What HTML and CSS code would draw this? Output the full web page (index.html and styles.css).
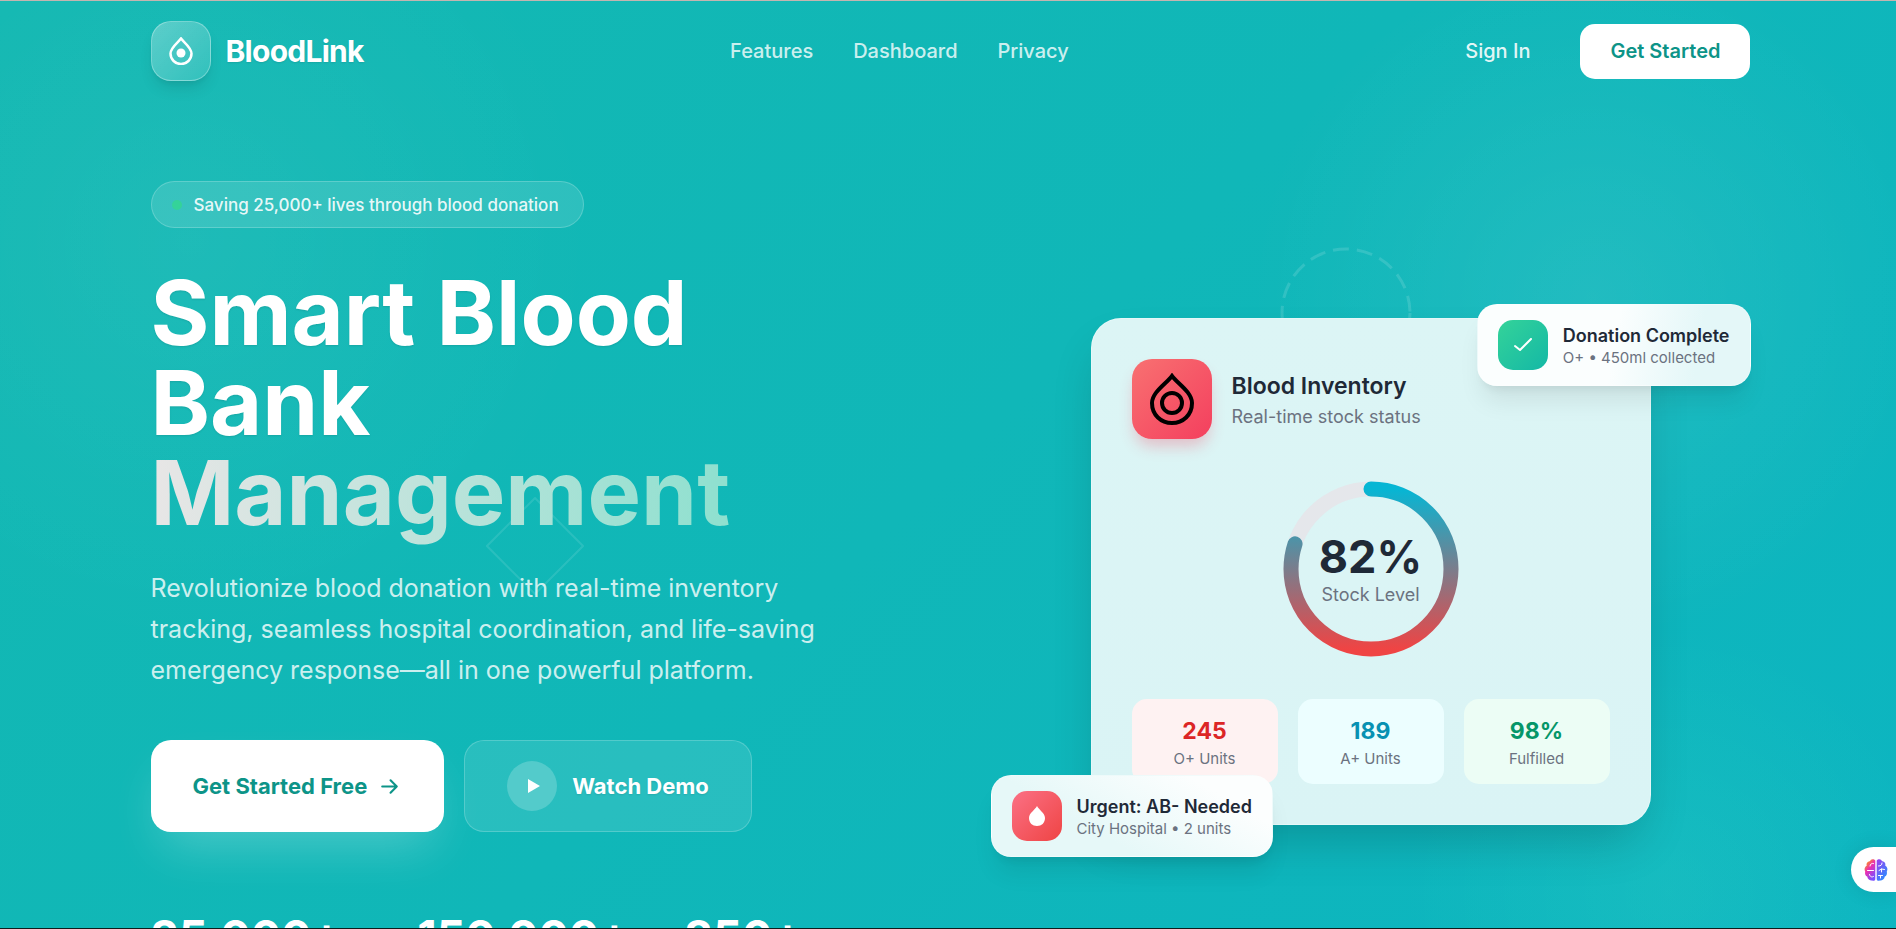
FILE: index.html
```html
<!DOCTYPE html>
<html lang="en">
<head>
  <meta charset="UTF-8">
  <meta name="viewport" content="width=device-width, initial-scale=1.0">
  <title>BloodLink - Smart Blood Bank Management</title>
  <link rel="stylesheet" href="styles.css">
</head>
<body>
  <!-- Background shapes -->
  <div class="bg-shapes">
    <svg class="shape-diamond" viewBox="0 0 100 100" fill="none">
      <path d="M50 1 L99 50 L50 99 L1 50 Z" stroke="white" stroke-width="2"/>
    </svg>
    <svg class="shape-circle" viewBox="0 0 132 132" fill="none">
      <circle cx="66" cy="66" r="64" stroke="white" stroke-width="3" stroke-dasharray="16 8"/>
    </svg>
  </div>

  <header class="container navbar">
    <a href="#" class="logo">
      <span class="logo-icon">
        <svg viewBox="0 0 24 28" fill="none">
          <path d="M12 1.500 C9.500 5 1.500 10.500 1.500 16.500 C1.500 22.500 6.200 27 12 27 C17.800 27 22.500 22.500 22.500 16.500 C22.500 10.500 14.500 5 12 1.500 Z" stroke="white" stroke-width="2.500"/>
          <circle cx="12" cy="16" r="4.500" fill="white"/>
        </svg>
      </span>
      <span class="logo-text">BloodLink</span>
    </a>

    <nav class="nav-links">
      <a href="#features">Features</a>
      <a href="#dashboard">Dashboard</a>
      <a href="#privacy">Privacy</a>
    </nav>

    <div class="nav-actions">
      <a href="#signin" class="sign-in">Sign In</a>
      <button type="button" class="btn-nav">Get Started</button>
    </div>
  </header>

  <main class="container hero">
    <section class="hero-content">
      <div class="hero-badge">
        <span class="badge-dot"></span>
        <span>Saving 25,000+ lives through blood donation</span>
      </div>

      <h1>Smart Blood Bank <span class="highlight">Management</span></h1>

      <p class="hero-text">Revolutionize blood donation with real-time inventory tracking, seamless hospital coordination, and life-saving emergency response—all in one powerful platform.</p>

      <div class="hero-buttons">
        <button type="button" class="btn btn-primary">
          Get Started Free
          <svg class="arrow" viewBox="0 0 24 24" fill="none" stroke="currentColor" stroke-width="2" stroke-linecap="round" stroke-linejoin="round">
            <path d="M5 12 H19 M13 6 L19 12 L13 18"/>
          </svg>
        </button>
        <button type="button" class="btn btn-glass">
          <span class="play">
            <svg viewBox="0 0 12 16"><path d="M0 1 L12 8 L0 15 Z" fill="white"/></svg>
          </span>
          Watch Demo
        </button>
      </div>

      <div class="hero-stats">
        <div>25,000+</div>
        <div>150,000+</div>
        <div>850+</div>
      </div>
    </section>

    <section class="hero-visual">
      <div class="card">
        <div class="card-header">
          <div class="card-icon">
            <svg viewBox="0 0 44 52" fill="none" stroke="black" stroke-width="4">
              <path d="M22 3 C17 10 2 19 2 30 C2 42 11 50 22 50 C33 50 42 42 42 30 C42 19 27 10 22 3 Z"/>
              <circle cx="22" cy="30" r="10"/>
            </svg>
          </div>
          <div>
            <h2>Blood Inventory</h2>
            <p>Real-time stock status</p>
          </div>
        </div>

        <div class="donut">
          <svg viewBox="0 0 200 200" fill="none">
            <defs>
              <linearGradient id="stockGradient" x1="0" y1="0" x2="1" y2="0">
                <stop offset="0" stop-color="#ef4444"/>
                <stop offset="1" stop-color="#06b6d4"/>
              </linearGradient>
            </defs>
            <circle cx="100" cy="100" r="80" stroke="#e5e7eb" stroke-width="15"/>
            <circle cx="100" cy="100" r="80" stroke="url(#stockGradient)" stroke-width="15" stroke-linecap="round" stroke-dasharray="402 503" transform="rotate(-90 100 100)"/>
          </svg>
          <div class="donut-label">
            <strong>82%</strong>
            <span>Stock Level</span>
          </div>
        </div>

        <div class="card-stats">
          <div class="stat stat-red"><strong>245</strong><span>O+ Units</span></div>
          <div class="stat stat-cyan"><strong>189</strong><span>A+ Units</span></div>
          <div class="stat stat-green"><strong>98%</strong><span>Fulfilled</span></div>
        </div>
      </div>

      <div class="float-card float-top">
        <div class="float-icon icon-green">
          <svg viewBox="0 0 18 14" fill="none" stroke="white" stroke-width="2" stroke-linecap="round" stroke-linejoin="round">
            <path d="M1 8 L6 12 L17 1"/>
          </svg>
        </div>
        <div>
          <h3>Donation Complete</h3>
          <p>O+ • 450ml collected</p>
        </div>
      </div>

      <div class="float-card float-bottom">
        <div class="float-icon icon-red">
          <svg viewBox="0 0 18 20" fill="white">
            <path d="M9 0 C7 4 1 7 1 12 C1 17 4.500 20 9 20 C13.500 20 17 17 17 12 C17 7 11 4 9 0 Z"/>
          </svg>
        </div>
        <div>
          <h3>Urgent: AB- Needed</h3>
          <p>City Hospital • 2 units</p>
        </div>
      </div>
    </section>
  </main>

  <button type="button" class="assistant-tab" aria-label="Open assistant">
    <svg viewBox="0 0 24 24" fill="none">
      <defs>
        <linearGradient id="brainLeft" x1="0" y1="0" x2="0.600" y2="1">
          <stop offset="0" stop-color="#f9a01b"/>
          <stop offset="0.200" stop-color="#f98a2b"/>
          <stop offset="0.500" stop-color="#ec2fb0"/>
          <stop offset="1" stop-color="#7c4dff"/>
        </linearGradient>
        <linearGradient id="brainRight" x1="0" y1="0" x2="0.600" y2="1">
          <stop offset="0" stop-color="#a03cf0"/>
          <stop offset="1" stop-color="#2d8cff"/>
        </linearGradient>
      </defs>
      <path fill="url(#brainLeft)" d="M11.300 2.500 C10 0.500 6.500 0.800 6 3.200 C3.500 3.200 2 5.500 2.800 7.600 C0.500 8.800 0 12 1.200 13.500 C0.600 16 1.500 18 3.200 18.600 C3.500 21.500 6.500 22.800 8.200 22.400 C9.800 23.500 11.300 22.500 11.300 21 Z"/>
      <path fill="url(#brainRight)" d="M12.700 2.500 C14 0.500 17.500 0.800 18 3.200 C20.500 3.200 22 5.500 21.200 7.600 C23.500 8.800 24 12 22.800 13.500 C23.400 16 22.500 18 20.800 18.600 C20.500 21.500 17.500 22.800 15.800 22.400 C14.200 23.500 12.700 22.500 12.700 21 Z"/>
      <path stroke="white" stroke-width="1" stroke-linecap="round" d="M6 8 C6 6 8 5 9.500 5.500 M3.500 12.500 H9.500 M5.500 16.500 C6 19 8 19.500 9.500 18.500 M14.500 8 C17 8 18 7 18 5 M15 12.500 L17.500 11 L20.500 11.500 M17.500 11 V14 M14.500 17.500 H18.500 M16.500 17.500 V20"/>
    </svg>
  </button>
</body>
</html>
```
FILE: styles.css
```css
* {
  box-sizing: border-box;
  margin: 0;
  padding: 0;
}

body {
  position: relative;
  height: 100vh;
  overflow: hidden;
  padding-left: 5px;
  border-top: 1px solid #c4b5b0;
  border-bottom: 1px solid #101c1c;
  font-family: 'Inter', sans-serif;
  color: #ffffff;
  background:
    radial-gradient(circle at 10% 26%, rgba(255, 255, 255, 0.05), transparent 22%),
    radial-gradient(circle at 84% 32%, rgba(255, 255, 255, 0.08), transparent 20%),
    radial-gradient(circle at 88% 96%, rgba(120, 255, 200, 0.09), transparent 14%),
    linear-gradient(135deg, #13b8b2 0%, #10b7b8 50%, #0cb5c1 100%);
}

a {
  color: inherit;
  text-decoration: none;
}

button {
  font-family: inherit;
  border: none;
  cursor: pointer;
}

.container {
  position: relative;
  width: 100%;
  max-width: 1600px;
  margin: 0 auto;
}

/* Background shapes */
.bg-shapes svg {
  position: absolute;
}

.shape-diamond {
  left: 486px;
  top: 496px;
  width: 98px;
  height: 98px;
  opacity: 0.1;
}

.shape-circle {
  left: 1280px;
  top: 246px;
  width: 132px;
  height: 132px;
  opacity: 0.13;
}

/* Navbar */
.navbar {
  display: flex;
  align-items: center;
  justify-content: space-between;
  padding: 20px 0;
}

.logo {
  display: flex;
  align-items: center;
  gap: 15px;
}

.logo-icon {
  display: flex;
  align-items: center;
  justify-content: center;
  width: 60px;
  height: 60px;
  border: 1px solid rgba(255, 255, 255, 0.3);
  border-radius: 20px;
  background: linear-gradient(135deg, rgba(255, 255, 255, 0.3), rgba(255, 255, 255, 0.1));
  box-shadow: 0 10px 15px -3px rgba(0, 0, 0, 0.1), 0 4px 6px -4px rgba(0, 0, 0, 0.1);
}

.logo-icon svg {
  width: 24px;
  height: 28px;
}

.logo-text {
  font-size: 30px;
  font-weight: 700;
  letter-spacing: -0.025em;
  text-shadow: 0 1px 2px rgba(0, 0, 0, 0.1);
}

.nav-links {
  display: flex;
  gap: 40px;
  font-size: 20px;
  font-weight: 500;
  color: rgba(255, 255, 255, 0.8);
}

.nav-actions {
  display: flex;
  align-items: center;
  gap: 20px;
}

.sign-in {
  padding: 15px 30px;
  font-size: 20px;
  font-weight: 500;
  color: rgba(255, 255, 255, 0.9);
}

.btn-nav {
  height: 55px;
  padding: 0 30px;
  border-radius: 15px;
  background: #ffffff;
  color: #0d9488;
  font-size: 20px;
  font-weight: 600;
}

/* Hero */
.hero {
  display: grid;
  grid-template-columns: 1fr 1fr;
  gap: 80px;
  align-items: center;
  padding-top: 80px;
}

.hero-badge {
  display: inline-flex;
  align-items: center;
  gap: 12px;
  height: 47px;
  padding: 0 24px 0 20px;
  border: 1px solid rgba(255, 255, 255, 0.2);
  border-radius: 24px;
  background: rgba(255, 255, 255, 0.12);
  color: rgba(255, 255, 255, 0.9);
  font-size: 17px;
  font-weight: 500;
  margin-bottom: 40px;
}

.badge-dot {
  width: 10px;
  height: 10px;
  border-radius: 50%;
  background: #34d399;
}

h1 {
  font-size: 90px;
  line-height: 90px;
  font-weight: 700;
  margin-bottom: 30px;
  text-shadow: 0 1px 2px rgba(0, 0, 0, 0.1);
}

.highlight {
  background: linear-gradient(90deg, #e8e6e6, #8ee0cf);
  background-clip: text;
  -webkit-background-clip: text;
  color: transparent;
  text-shadow: none;
}

.hero-text {
  max-width: 700px;
  margin-bottom: 49px;
  font-size: 25px;
  line-height: 41px;
  color: rgba(255, 255, 255, 0.8);
}

.hero-buttons {
  display: flex;
  gap: 20px;
  margin-bottom: 80px;
}

.btn {
  display: flex;
  align-items: center;
  height: 92px;
  padding: 0 42px;
  border-radius: 20px;
  font-size: 22px;
  font-weight: 700;
}

.btn-primary {
  gap: 10px;
  background: #ffffff;
  color: #0d9488;
  box-shadow: 0 25px 50px -12px rgba(255, 255, 255, 0.25);
}

.arrow {
  width: 25px;
  height: 25px;
}

.btn-glass {
  gap: 15px;
  border: 1px solid rgba(255, 255, 255, 0.2);
  background: rgba(255, 255, 255, 0.1);
  color: #ffffff;
  text-shadow: 0 1px 2px rgba(0, 0, 0, 0.1);
}

.play {
  display: flex;
  align-items: center;
  justify-content: center;
  width: 50px;
  height: 50px;
  padding-left: 4px;
  border-radius: 50%;
  background: rgba(255, 255, 255, 0.2);
}

.play svg {
  width: 12px;
  height: 16px;
}

.hero-stats {
  display: grid;
  grid-template-columns: repeat(3, 1fr);
  gap: 40px;
  font-size: 45px;
  line-height: 50px;
  font-weight: 700;
}

/* Inventory card */
.hero-visual {
  position: relative;
}

.card {
  max-width: 560px;
  margin: 0 auto;
  padding: 40px;
  border: 1px solid rgba(255, 255, 255, 0.3);
  border-radius: 30px;
  background: linear-gradient(#dcf5f5, #daf4f5);
  box-shadow: 0 25px 50px -12px rgba(0, 0, 0, 0.2);
  color: #1f2937;
}

.card-header {
  display: flex;
  align-items: center;
  gap: 20px;
  margin-bottom: 30px;
}

.card-icon {
  display: flex;
  align-items: center;
  justify-content: center;
  width: 80px;
  height: 80px;
  border-radius: 20px;
  background: linear-gradient(135deg, #f87171, #f43f5e);
  box-shadow: 0 10px 15px -3px rgba(244, 63, 94, 0.3);
}

.card-icon svg {
  width: 44px;
  height: 52px;
}

.card-header h2 {
  font-size: 23px;
  line-height: 35px;
  font-weight: 600;
}

.card-header p {
  font-size: 18px;
  line-height: 25px;
  color: #6b7280;
}

.donut {
  position: relative;
  width: 200px;
  height: 200px;
  margin: 0 auto 30px;
}

.donut svg {
  display: block;
}

.donut-label {
  position: absolute;
  inset: 0;
  display: flex;
  flex-direction: column;
  align-items: center;
  justify-content: center;
}

.donut-label strong {
  font-size: 45px;
  line-height: 50px;
}

.donut-label span {
  font-size: 18px;
  line-height: 25px;
  color: #6b7280;
}

.card-stats {
  display: grid;
  grid-template-columns: repeat(3, 1fr);
  gap: 20px;
}

.stat {
  display: flex;
  flex-direction: column;
  align-items: center;
  padding: 15px;
  border-radius: 15px;
}

.stat strong {
  font-size: 23px;
  line-height: 35px;
}

.stat span {
  font-size: 15px;
  line-height: 20px;
  color: #6b7280;
}

.stat-red {
  background: #fef2f2;
}

.stat-red strong {
  color: #dc2626;
}

.stat-cyan {
  background: #ecfeff;
}

.stat-cyan strong {
  color: #0891b2;
}

.stat-green {
  background: #ecfdf5;
}

.stat-green strong {
  color: #059669;
}

/* Floating notifications */
.float-card {
  position: absolute;
  display: flex;
  align-items: center;
  gap: 15px;
  padding: 15px 20px;
  border: 1px solid rgba(255, 255, 255, 0.3);
  border-radius: 20px;
  color: #1f2937;
  box-shadow: 0 20px 25px -5px rgba(0, 0, 0, 0.08), 0 8px 10px -6px rgba(0, 0, 0, 0.08);
}

.float-top {
  top: -14px;
  right: 0;
  background: linear-gradient(100deg, #fbfefe 50%, #e4f7f8 80%);
}

.float-bottom {
  bottom: -32px;
  left: 0;
  background: linear-gradient(30deg, #e6f8f8 35%, #fcfefe 80%);
}

.float-icon {
  display: flex;
  align-items: center;
  justify-content: center;
  width: 50px;
  height: 50px;
  border-radius: 15px;
}

.float-icon svg {
  width: 18px;
}

.icon-green {
  background: linear-gradient(135deg, #34d399, #14b8a6);
}

.icon-red {
  background: linear-gradient(135deg, #fb7185, #ef4444);
}

.float-card h3 {
  font-size: 18px;
  line-height: 25px;
  font-weight: 600;
}

.float-card p {
  font-size: 15px;
  line-height: 20px;
  color: #6b7280;
}

/* Assistant tab on the window edge */
.assistant-tab {
  position: absolute;
  right: 0;
  bottom: 36px;
  display: flex;
  align-items: center;
  width: 45px;
  height: 45px;
  padding-left: 13px;
  border-radius: 23px 0 0 23px;
  background: #ffffff;
  box-shadow: 0 0 20px rgba(0, 0, 0, 0.1);
}

.assistant-tab svg {
  width: 24px;
  height: 24px;
}
```
